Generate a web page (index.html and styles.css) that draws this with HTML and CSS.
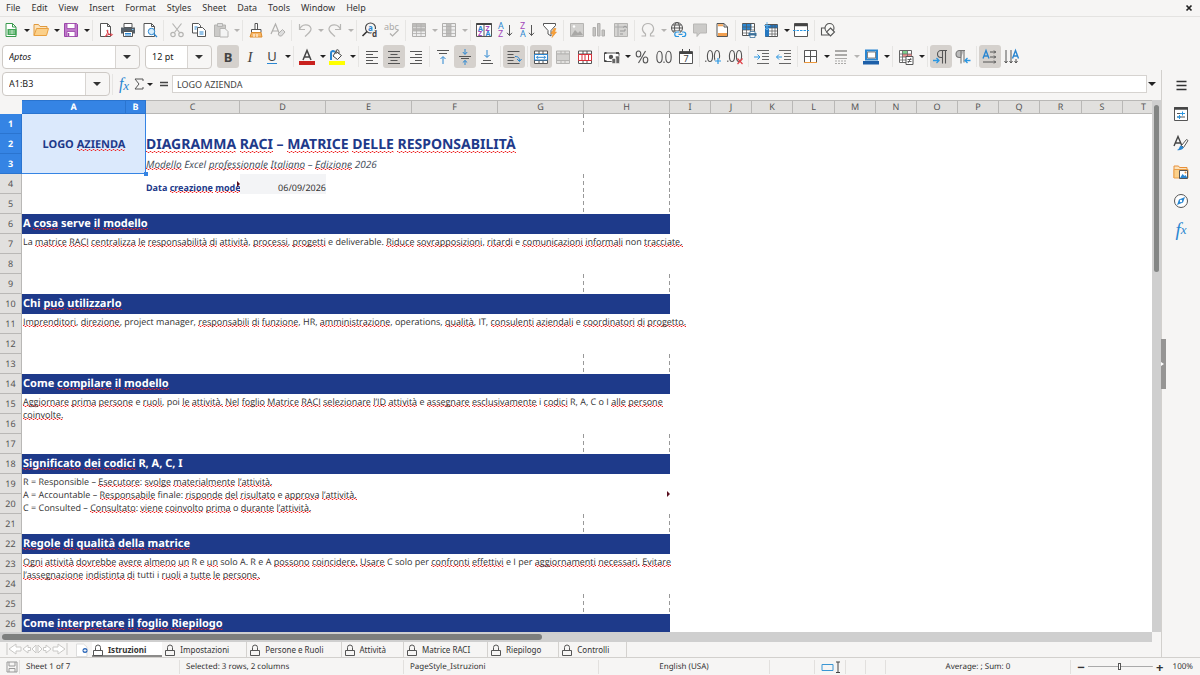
FILE: index.html
```html
<!DOCTYPE html>
<html lang="en">
<head>
<meta charset="utf-8">
<meta name="viewport" content="width=device-width, initial-scale=1">
<title>Diagramma RACI</title>
<link rel="stylesheet" href="styles.css">
</head>
<body>
<nav class="menubar" aria-label="Menu">
  <button>File</button><button>Edit</button><button>View</button><button>Insert</button><button>Format</button><button>Styles</button><button>Sheet</button><button>Data</button><button>Tools</button><button>Window</button><button>Help</button>
  <button class="close" aria-label="Close"><svg class="tiny" viewBox="0 0 8 8"><path d="M1.500 1.500l5 5M6.500 1.500l-5 5" stroke="#222" stroke-width="1.700"/></svg></button>
</nav>

<div class="toolbar" role="toolbar" aria-label="Standard">
  <button class="tool" aria-label="New"><svg viewBox="0 0 16 16"><path d="M3 1.500h6.500l3.500 3.500v9.500h-10z" fill="#fff" stroke="#3a9a4e"/><path d="M9.500 1.500v3.500h3.500" stroke="#3a9a4e"/><path d="M4.500 7h9v6h-9z" fill="#43a657"/><path d="M6 9h6M6 11h6M9 8v4" stroke="#d5f0da" stroke-width=".8"/></svg></button><button class="caret" aria-label="New options"></button>
  <button class="tool" aria-label="Open"><svg viewBox="0 0 16 16"><path d="M1 13.500v-11h4.500l1.500 2h7v2" fill="#fbe3bd" stroke="#e09a3e"/><path d="M1 13.500l2.500-7h12l-2 7z" fill="#fbd08a" stroke="#e9a03f"/></svg></button><button class="caret" aria-label="Open options"></button>
  <button class="tool" aria-label="Save"><svg viewBox="0 0 16 16"><path d="M1.500 1.500h12l1 1v12h-13z" fill="#c07acb" stroke="#9a45a8"/><path d="M4 1.500h8v5h-8zM4 9.500h8v5h-8z" fill="#fff" stroke="#9a45a8" stroke-width=".8"/><path d="M5.500 11v3" stroke="#9a45a8" stroke-width="1.500"/></svg></button><button class="caret" aria-label="Save options"></button>
  <i class="sep"></i>
  <button class="tool" aria-label="Export PDF"><svg viewBox="0 0 16 16"><path d="M2.500 1.500h7l3 3v10h-10z" fill="#fff" stroke="#555"/><path d="M9.500 1.500v3h3" stroke="#555"/><path d="M7 14.500c3-3 3-6 2.500-6.500s-1 1 1 3.500 4 2 4 1.200-4-1.200-7 1.800z" fill="none" stroke="#d8303a"/></svg></button>
  <button class="tool" aria-label="Print"><svg viewBox="0 0 16 16"><path d="M4 1.500h8v4h-8z" fill="#fff" stroke="#555"/><path d="M1 5.500h14v6h-14z" fill="#566069"/><path d="M3.500 9.500h9v5h-9z" fill="#fff" stroke="#555"/><path d="M5 11.500h6M5 13h6" stroke="#2a86d1"/><path d="M12 7.500h1.500" stroke="#7cc4f5"/></svg></button>
  <button class="tool" aria-label="Print preview"><svg viewBox="0 0 16 16"><path d="M2 1.500h7.500l3 3v10h-10.500z" fill="#fff" stroke="#555"/><path d="M9.500 1.500v3h3" stroke="#555"/><circle cx="9.500" cy="9.500" r="3.200" fill="#d8edfb" stroke="#2a86d1"/><path d="M12 12l3 3" stroke="#2a86d1" stroke-width="1.300"/></svg></button>
  <i class="sep"></i>
  <button class="tool" disabled aria-label="Cut"><svg viewBox="0 0 16 16"><g stroke="#b5b4b2" stroke-width="1.200"><path d="M3.500 1.500l7 9M12.500 1.500l-7 9"/><circle cx="4" cy="12.500" r="2.200"/><circle cx="12" cy="12.500" r="2.200"/></g></svg></button>
  <button class="tool" aria-label="Copy"><svg viewBox="0 0 16 16"><g fill="#fff" stroke="#555"><path d="M1.500 1.500h6l2 2v7.500h-8z"/><path d="M6.500 5.500h5l3 3v6h-8z"/></g><path d="M3.500 5h3M3.500 7h2M8.500 10h4M8.500 12h4" stroke="#2a86d1"/></svg></button>
  <button class="tool" disabled aria-label="Paste"><svg viewBox="0 0 16 16"><path d="M1.500 3h11v11.500h-11z" fill="#cbcac8" stroke="#b5b4b2"/><path d="M4.500 1.500h5v3h-5z" fill="#ddd" stroke="#b5b4b2"/><path d="M7 6.500h5l3 3v5.500h-8z" fill="#f4f4f4" stroke="#b5b4b2"/></svg></button><button class="caret" disabled aria-label="Paste options"></button>
  <i class="sep"></i>
  <button class="tool" aria-label="Clone formatting"><svg viewBox="0 0 16 16"><path d="M7 1.500h2.500v6H7z" fill="#fff" stroke="#555"/><path d="M3.500 7.500h9.500v3H3.500z" fill="#fff" stroke="#555"/><path d="M3.500 10.500h9.500l1 4.500h-12z" fill="#f6b76a" stroke="#dd8c2c"/><path d="M6 12v3M9 12v3" stroke="#fff"/></svg></button>
  <button class="tool" disabled aria-label="Clear formatting"><svg viewBox="0 0 16 16"><path d="M1 12l4.500-10 4 10M2.500 9h6" stroke="#b0afad" stroke-width="1.200"/><path d="M8 12l4.500-4.500 2.500 2.500-3.500 4h-2z" fill="#ddd" stroke="#b0afad"/></svg></button>
  <i class="sep"></i>
  <button class="tool" disabled aria-label="Undo"><svg viewBox="0 0 16 16"><path d="M2.500 2v5.500h5.500M2.500 7.500c2-6 10-6 11.500-1 .5 3-3 5-6 8" stroke="#b8b7b5" stroke-width="1.200"/></svg></button><button class="caret" disabled aria-label="Undo list"></button>
  <button class="tool" disabled aria-label="Redo"><svg viewBox="0 0 16 16"><path d="M13.500 2v5.500H8M13.500 7.500c-2-6-10-6-11.500-1-.5 3 3 5 6 8" stroke="#b8b7b5" stroke-width="1.200"/></svg></button><button class="caret" disabled aria-label="Redo list"></button>
  <i class="sep"></i>
  <button class="tool" aria-label="Find and replace"><svg viewBox="0 0 16 16"><circle cx="8.500" cy="6" r="5" stroke="#444" stroke-width="1.100"/><path d="M5 9.500l-4.500 4.500" stroke="#333" stroke-width="1.600"/><text x="6" y="9" font-size="8" fill="#2a86d1" font-weight="bold">a</text><text x="10" y="15" font-size="8" fill="#444" font-weight="bold" stroke="#f5f4f2" stroke-width="2" paint-order="stroke">d</text></svg></button>
  <button class="tool" disabled aria-label="Spelling"><svg viewBox="0 0 16 16"><text x="0" y="8" font-size="9" fill="#aaa9a7">abc</text><path d="M6 11.500l2.500 2.500 6-6" stroke="#b0afad" stroke-width="1.200"/></svg></button>
  <i class="sep"></i>
  <button class="tool" disabled aria-label="Row"><svg viewBox="0 0 16 16"><path d="M1.500 1.500h13v13h-13z" fill="#eee" stroke="#b0afad"/><path d="M1.500 1.500h13v3h-13zM1.500 5.500h13v4h-13z" fill="#bdbcba"/><path d="M5.500 2v12M10 2v12M2 4.500h12M2 8h12M2 11.500h12" stroke="#b0afad" stroke-width=".8"/></svg></button><button class="caret" disabled aria-label="Row options"></button>
  <button class="tool" disabled aria-label="Column"><svg viewBox="0 0 16 16"><path d="M1.500 1.500h13v13h-13z" fill="#eee" stroke="#b0afad"/><path d="M5.500 1.500h4.500v13h-4.500z" fill="#bdbcba"/><path d="M5.500 2v12M10 2v12M2 4.500h12M2 8h12M2 11.500h12" stroke="#b0afad" stroke-width=".8"/></svg></button><button class="caret" disabled aria-label="Column options"></button>
  <i class="sep"></i>
  <button class="tool" aria-label="Sort"><svg viewBox="0 0 16 16"><path d="M.5 1.500h15v13h-15zM8 3v11.500" fill="#fff" stroke="#555"/><path d="M.5 2h15" stroke="#444" stroke-width="2"/><g font-size="7" font-weight="bold"><text x="2" y="8.500" fill="#2a86d1">A</text><text x="2" y="14.200" fill="#a347ba">Z</text><text x="9.500" y="8.500" fill="#a347ba">Z</text><text x="9.500" y="14.200" fill="#2a86d1">A</text></g></svg></button>
  <button class="tool" aria-label="Sort ascending"><svg viewBox="0 0 16 16"><g font-size="9"><text x="0" y="7" fill="#2a86d1">A</text><text x="0" y="15" fill="#a347ba">Z</text></g><path d="M11.500 3v10.500M9 10.800l2.500 2.700 2.500-2.700" stroke="#555"/></svg></button>
  <button class="tool" aria-label="Sort descending"><svg viewBox="0 0 16 16"><g font-size="9"><text x="0" y="7" fill="#a347ba">Z</text><text x="0" y="15" fill="#2a86d1">A</text></g><path d="M11.500 3v10.500M9 10.800l2.500 2.700 2.500-2.700" stroke="#555"/></svg></button>
  <button class="tool" aria-label="AutoFilter"><svg viewBox="0 0 16 16"><path d="M1.500 1.500h12v2l-4.500 5v5.500l-3-2v-3.500l-4.500-5z" fill="#fff" stroke="#555"/><path d="M12 6.500l-3 5h2l-1 4 4.500-5.500h-2l1.500-3.500z" fill="#f8a23b" stroke="#e8871b" stroke-width=".5"/></svg></button>
  <i class="sep"></i>
  <button class="tool" disabled aria-label="Image"><svg viewBox="0 0 16 16"><path d="M1.500 1.500h13v13h-13z" fill="#d2d1cf" stroke="#b5b4b2"/><path d="M2 14l4-6 3 3 2-2 3 4" fill="#a9a8a6"/><circle cx="5" cy="4.500" r="1.200" fill="#fff"/></svg></button>
  <button class="tool" disabled aria-label="Chart"><svg viewBox="0 0 16 16"><path d="M2 5.500h2.500v8.500H2zM6.500 1.500H9v12.500H6.500zM11 8h2.500v6H11z" fill="#c6c5c3" stroke="#b0afad"/></svg></button>
  <button class="tool" disabled aria-label="Pivot table"><svg viewBox="0 0 16 16"><path d="M1.500 1.500h13v13h-13z" fill="#d5d4d2" stroke="#b5b4b2"/><path d="M2 5h12M5 2v12" stroke="#aaa"/><path d="M7 9h5V7M10 5.500l2-1.500 2 1.500M7 12h3" stroke="#999"/></svg></button>
  <i class="sep"></i>
  <button class="tool" disabled aria-label="Special character"><svg viewBox="0 0 16 16"><path d="M1.500 14h4v-2c-6-5-2-10.500 2.500-10.500s8.500 5.500 2.500 10.500v2h4" stroke="#b5b4b2" stroke-width="1.200"/></svg></button><button class="caret" disabled aria-label="Characters"></button>
  <button class="tool" aria-label="Hyperlink"><svg viewBox="0 0 16 16"><g stroke="#555"><circle cx="7" cy="6" r="5.500"/><ellipse cx="7" cy="6" rx="2.500" ry="5.500"/><path d="M1.500 6h11M2.500 3h9M2.500 9h9"/></g><path d="M9.500 10.500h-2a2 2 0 000 4h2M12.500 10.500h1a2 2 0 010 4h-1M9.500 12.500h4" stroke="#f5f4f2" stroke-width="3"/><path d="M9 10H7a2.200 2.200 0 000 4.500h2M12 10h1.500a2.200 2.200 0 010 4.500H12M8.500 12.300h4" stroke="#2a96e1" stroke-width="1.200"/></svg></button>
  <button class="tool" disabled aria-label="Comment"><svg viewBox="0 0 16 16"><path d="M1.500 2h13v9H8l-3 3.500V11H1.500z" fill="#cbcac8" stroke="#b8b7b5"/></svg></button>
  <button class="tool" aria-label="Headers and footers"><svg viewBox="0 0 16 16"><path d="M3 1.500h7l3.500 3.500v9.500H3z" fill="#fff" stroke="#555"/><path d="M10 1.500V5h3.500" stroke="#555"/><path d="M4 2.200h5v2H4zM4 11h9v3H4z" fill="#f2a050"/></svg></button>
  <i class="sep"></i>
  <button class="tool" aria-label="Define print area"><svg viewBox="0 0 16 16"><path d="M1.500 1.500h12v12h-12z" fill="#fff" stroke="#555"/><path d="M1.500 2h9v6h-9z" fill="#2a86d1"/><path d="M1.500 5h12M1.500 8h12M1.500 11h12M5.500 1.500v12M9.500 1.500v12" stroke="#555" stroke-width=".7"/><path d="M7.500 11h8v3h-8z" fill="#3a6e98"/><path d="M9 9.500h5v2H9zM9 13h5v2.500H9z" fill="#fff" stroke="#3a6e98" stroke-width=".8"/></svg></button>
  <button class="tool" aria-label="Freeze rows and columns"><svg viewBox="0 0 16 16"><path d="M2.500 2.500h12v12h-12z" fill="#fff" stroke="#555"/><path d="M2.500 3h12v3h-12zM2 5h4v9.500H2z" fill="#2477c0"/><path d="M6 6h8.500M6 9h8.500M6 12h8.500M9 3v11M12 3v11" stroke="#555" stroke-width=".7"/><path d="M4 0v8M2 6l2 2 2-2M1 3.500h6" stroke="#64b6ee" stroke-width=".9"/></svg></button><button class="caret" aria-label="Freeze options"></button>
  <button class="tool" aria-label="Split window"><svg viewBox="0 0 16 16"><path d="M1.500 1.500h13v13h-13z" fill="#fff" stroke="#555"/><path d="M1.500 3h13" stroke="#444" stroke-width="2.500"/><path d="M0 8.500h16" stroke="#2a96e1" stroke-dasharray="2.500 1"/></svg></button>
  <i class="sep"></i>
  <button class="tool" aria-label="Draw functions"><svg viewBox="0 0 16 16"><g fill="#f8f8f6" stroke="#555" stroke-width="1.100"><path d="M1.500 6h7v7h-7z"/><circle cx="9.500" cy="6" r="4.500"/><path d="M10.500 6l4 4-4 4-4-4z"/></g></svg></button>
</div>

<div class="toolbar formatting" role="toolbar" aria-label="Formatting">
  <select class="combo font-name" aria-label="Font name"><option>Aptos</option></select>
  <select class="combo font-size" aria-label="Font size"><option>12 pt</option></select>
  <button class="tool on glyph bold" aria-label="Bold">B</button>
  <button class="tool glyph italic" aria-label="Italic">I</button>
  <button class="tool glyph" aria-label="Underline"><span class="under">U</span></button><button class="caret" aria-label="Underline options"></button>
  <i class="sep"></i>
  <button class="tool" aria-label="Font colour"><svg viewBox="0 0 16 16"><path d="M4 11l4-9.500 4 9.500M5.300 8h5.400" stroke="#444" stroke-width="1.500"/><path d="M0 12h16v4H0z" fill="#c9211e"/></svg></button><button class="caret" aria-label="Font colours"></button>
  <button class="tool" aria-label="Background colour"><svg viewBox="0 0 16 16"><path d="M2 11V4c0-2 2-2.500 4-1" stroke="#2a86d1" stroke-width="2"/><path d="M7 2.500l5.500 4-4 4-4.500-3.500z" fill="#fff" stroke="#444"/><path d="M7 5V1.500c1.500-1.500 3-.5 3 1v2" stroke="#444"/><path d="M0 12h16v4H0z" fill="#ff0"/></svg></button><button class="caret" aria-label="Background colours"></button>
  <i class="sep"></i>
  <button class="tool" aria-label="Align left"><svg viewBox="0 0 16 16"><path d="M2 2.500h12M2 5.500h7M2 8.500h12M2 11.500h7M2 14.500h12" stroke="#555"/></svg></button>
  <button class="tool on" aria-label="Centre"><svg viewBox="0 0 16 16"><path d="M2 2.500h12M4.500 5.500h7M2 8.500h12M4.500 11.500h7M2 14.500h12" stroke="#555"/></svg></button>
  <button class="tool" aria-label="Align right"><svg viewBox="0 0 16 16"><path d="M2 2.500h12M7 5.500h7M2 8.500h12M7 11.500h7M2 14.500h12" stroke="#555"/></svg></button>
  <i class="sep"></i>
  <button class="tool" aria-label="Align top"><svg viewBox="0 0 16 16"><path d="M2 1.500h12M4 4.500h8" stroke="#555"/><path d="M8 15V8M5.500 10L8 7.500l2.500 2.500" stroke="#2a86d1"/></svg></button>
  <button class="tool on" aria-label="Centre vertically"><svg viewBox="0 0 16 16"><path d="M2 7.500h12M4 9.500h8" stroke="#555"/><path d="M8 0v5M5.800 3L8 5.500 10.200 3M8 16v-4.500M5.800 13.500L8 11.500l2.200 2" stroke="#2a86d1"/></svg></button>
  <button class="tool" aria-label="Align bottom"><svg viewBox="0 0 16 16"><path d="M4 11.500h8M2 14.500h12" stroke="#555"/><path d="M8 1v7M5.500 6L8 8.500 10.500 6" stroke="#2a86d1"/></svg></button>
  <i class="sep"></i>
  <button class="tool on" aria-label="Wrap text"><svg viewBox="0 0 16 16"><path d="M1.500 2.500h12M1.500 5.500h6M1.500 8.500h7M1.500 11.500h6M1.500 14.500h12" stroke="#555"/><path d="M9 7.500c3.500 0 4.500 1.500 4.500 4.500M11 10l2.500 2.500L15.500 10" stroke="#2a86d1"/></svg></button>
  <i class="sep"></i>
  <button class="tool on" aria-label="Merge and centre"><svg viewBox="0 0 16 16"><path d="M1.500 2h13v12.500h-13zM1.500 5h13M1.500 11.500h13M6 2v3M10 2v3M6 11.500v3M10 11.500v3" fill="#fff" stroke="#555"/><path d="M1.500 5.500h13v5.500h-13z" fill="#fff" stroke="#2a86d1"/><path d="M3.500 8.300h9M5 6.800L3.500 8.300 5 9.800M11 6.800l1.500 1.500L11 9.800" stroke="#2a86d1"/></svg></button>
  <button class="tool" disabled aria-label="Merge cells"><svg viewBox="0 0 16 16"><path d="M1.500 2h13v12.500h-13zM1.500 5h13M1.500 11.500h13M6 2v3M10 2v3M6 11.500v3M10 11.500v3" fill="#e2e1df" stroke="#b5b4b2"/><path d="M1.500 5h13v6.500h-13z" fill="#d2d1cf" stroke="#b5b4b2"/></svg></button>
  <button class="tool" aria-label="Unmerge cells"><svg viewBox="0 0 16 16"><path d="M1.500 2h13v12.500h-13zM1.500 5h13M1.500 11.500h13M6 2v3M10 2v3M6 11.500v3M10 11.500v3" fill="#fff" stroke="#555"/><path d="M1.500 5.500h13v6h-13zM5 5v6.500M8 5v6.500M11.500 5v6.500" fill="#fff" stroke="#d8303a"/></svg></button>
  <i class="sep"></i>
  <button class="tool" aria-label="Currency"><svg viewBox="0 0 16 16"><path d="M.5 4h14.500v8.500H.5z" fill="#fff" stroke="#555"/><circle cx="7" cy="8" r="2.200" fill="#555"/><path d="M.5 4h2M.5 12h2M12 4h3" stroke="#333" stroke-width="1.500"/><path d="M8 9.500h4v5H8zM11.500 7h4v7.500h-4z" fill="#666" stroke="#f6f5f3" stroke-width=".6"/></svg></button><button class="caret" aria-label="Currencies"></button>
  <button class="tool" aria-label="Percent"><svg viewBox="0 0 16 16"><g stroke="#555" stroke-width="1.100"><ellipse cx="4.500" cy="5" rx="2.300" ry="3"/><ellipse cx="11.500" cy="11" rx="2.300" ry="3"/><path d="M11.500 2l-7 12"/></g></svg></button>
  <button class="tool" aria-label="Number"><svg viewBox="0 0 16 16"><g stroke="#555" stroke-width="1.100"><ellipse cx="3.500" cy="8" rx="2.700" ry="5.700"/><ellipse cx="12.500" cy="8" rx="2.700" ry="5.700"/><path d="M8 12.500v1.500"/></g></svg></button>
  <button class="tool" aria-label="Date"><svg viewBox="0 0 16 16"><path d="M1.500 2.500h13v12h-13z" fill="#fff" stroke="#555"/><path d="M1.500 4h13" stroke="#444" stroke-width="2"/><path d="M4.500 0v3M11.500 0v3" stroke="#444"/><text x="5.500" y="13" font-size="9" fill="#444">7</text></svg></button>
  <i class="sep"></i>
  <button class="tool" aria-label="Add decimal place"><svg viewBox="0 0 16 16"><g stroke="#555" stroke-width="1.100"><ellipse cx="5" cy="7" rx="2.600" ry="5.500"/><ellipse cx="12" cy="7" rx="2.600" ry="5.500"/><path d="M.8 11.500V13"/></g><path d="M13 9v6M10 12h6" stroke="#f6f5f3" stroke-width="3"/><path d="M13 9v6M10 12h6" stroke="#2a96e1" stroke-width="1.200"/></svg></button>
  <button class="tool" aria-label="Delete decimal place"><svg viewBox="0 0 16 16"><g stroke="#555" stroke-width="1.100"><ellipse cx="5" cy="7" rx="2.600" ry="5.500"/><ellipse cx="12" cy="7" rx="2.600" ry="5.500"/><path d="M.8 11.500V13"/></g><path d="M10.500 9.500l5 5.500M15.500 9.500l-5 5.500" stroke="#e04048" stroke-width="1.200"/></svg></button>
  <i class="sep"></i>
  <button class="tool" aria-label="Increase indent"><svg viewBox="0 0 16 16"><path d="M3 1.500h12M8 4.500h7M8 7.500h7M8 10.500h7M3 14.500h12" stroke="#666"/><path d="M0 8h6M3.500 5.500L6 8l-2.500 2.500" stroke="#2a96e1"/></svg></button>
  <button class="tool" aria-label="Decrease indent"><svg viewBox="0 0 16 16"><path d="M3 1.500h12M8 4.500h7M8 7.500h7M8 10.500h7M3 14.500h12" stroke="#666"/><path d="M6 8H.5M3 5.500L.5 8 3 10.500" stroke="#2a96e1"/></svg></button>
  <i class="sep"></i>
  <button class="tool" aria-label="Borders"><svg viewBox="0 0 16 16"><path d="M1.500 1.500h12v12h-12z" fill="#fff" stroke="#555"/><path d="M7.500 2v12M2 7.500h12" stroke="#555"/><path d="M1 13.500h13" stroke="#eb983d"/></svg></button><button class="caret" aria-label="Border options"></button>
  <button class="tool" disabled aria-label="Border style"><svg viewBox="0 0 16 16"><path d="M2 2h12M2 6h12" stroke="#aaa9a7" stroke-width="2"/><path d="M2 9.500h12" stroke="#aaa9a7"/><path d="M2 12h12M2 14.500h12" stroke="#aaa9a7" stroke-dasharray="2 1"/></svg></button><button class="caret" disabled aria-label="Border styles"></button>
  <button class="tool" aria-label="Border colour"><svg viewBox="0 0 16 16"><path d="M3 1.500h11v9H3z" fill="#fff" stroke="#2a86d1" stroke-width="2"/><path d="M4.500 3h8v6h-8z" stroke="#666" stroke-width=".8"/><path d="M0 12h16v3.500H0z" fill="#1d5fa8"/></svg></button><button class="caret" aria-label="Border colours"></button>
  <i class="sep"></i>
  <button class="tool" aria-label="Conditional formatting"><svg viewBox="0 0 16 16"><path d="M1.500 1.500h12v12h-12z" fill="#fff" stroke="#666"/><path d="M4.500 2h5v3h-5z" fill="#7fd38f"/><path d="M4.500 5h9v3h-9z" fill="#ee8f8f"/><path d="M1.500 5h12M1.500 8h12M1.500 11h12M4.500 1.500v12M9.500 1.500v7" stroke="#666" stroke-width=".8"/><path d="M8 7.500h7v8H8z" fill="#fff" stroke="#555"/><path d="M9.500 10.500h4M9.500 12.500h4M13 9l-3 5" stroke="#444" stroke-width=".8"/></svg></button><button class="caret" aria-label="Conditional options"></button>
  <i class="sep"></i>
  <button class="tool on" aria-label="Left to right"><svg viewBox="0 0 16 16"><path d="M14 1.500H8a3.500 3.500 0 000 7h1.500M9.500 1.500v13M12.500 1.500v13" stroke="#555" stroke-width="1.100"/><path d="M0 11.500h6M3.500 9L6 11.500 3.500 14" stroke="#2a96e1" stroke-width="1.300"/></svg></button>
  <button class="tool" aria-label="Right to left"><svg viewBox="0 0 16 16"><path d="M9 1.500H4.500a3.500 3.500 0 000 7H6z" fill="#bbb"/><path d="M10 1.500H4.500a3.500 3.500 0 000 7H6M6 1.500v13M9 1.500v12" stroke="#777" stroke-width="1.100"/><path d="M15.500 11.500H10M12.500 9L10 11.500l2.500 2.500" stroke="#2a96e1" stroke-width="1.300"/></svg></button>
  <i class="sep"></i>
  <button class="tool on" aria-label="Horizontal text"><svg viewBox="0 0 16 16"><path d="M1 9.500l3-8 3 8M2 7h4" stroke="#2a86d1" stroke-width="1.400"/><path d="M8 3h6M12 1.500L13.500 3 12 4.500M8 8h6M12 6.500L13.500 8 12 9.500M1 13h13M12 11.500l1.500 1.500-1.500 1.500" stroke="#555"/></svg></button>
  <button class="tool" aria-label="Vertical text"><svg viewBox="0 0 16 16"><path d="M8.500 9.500l3-8 3 8M9.500 7h4" stroke="#2a86d1" stroke-width="1.400"/><path d="M2 1v13M.5 12L2 14l1.500-2M7 1v13M5.500 12L7 14l1.500-2M12 10v4M10.500 12l1.500 2 1.500-2" stroke="#555"/></svg></button>
</div>

<div class="workspace">
<main class="document">
  <div class="formula-bar">
    <select class="combo name-box" aria-label="Name box"><option>A1:B3</option></select>
    <i class="sep"></i>
    <button class="fx" aria-label="Function wizard">f<sub>x</sub></button>
    <button class="sum" aria-label="Select function"><svg viewBox="0 0 10 12"><path d="M9 3V1H1l4 5-4 5h8V9" stroke="#555"/></svg></button><button class="caret" aria-label="Function list"></button>
    <button class="equals" aria-label="Formula"><svg class="tiny" viewBox="0 0 8 8"><path d="M0 2.500h8M0 5.500h8" stroke="#444" stroke-width="1.300"/></svg></button>
    <input class="formula" type="text" value="LOGO AZIENDA" aria-label="Input line">
    <button class="expand" aria-label="Expand formula bar"></button>
  </div>
  <div class="grid-area">
    <div class="sheet">
    <table>
      <colgroup><col class="c-head"><col class="c-a"><col class="c-b"><col class="c-c"><col span="5" class="c-mid"><col span="3" class="c-std"><col class="c-wide"><col span="5" class="c-std"><col class="c-wide"><col class="c-std"><col></colgroup>
      <thead><tr><td class="corner"></td><th class="sel">A</th><th class="sel">B</th><th>C</th><th>D</th><th>E</th><th>F</th><th>G</th><th>H</th><th>I</th><th>J</th><th>K</th><th>L</th><th>M</th><th>N</th><th>O</th><th>P</th><th>Q</th><th>R</th><th>S</th><th class="last">T</th></tr></thead>
      <tbody>
      <tr><th class="sel">1</th><td class="logo" colspan="2" rowspan="3">LOGO <u>AZIENDA</u><span class="handle"></span></td><td colspan="5" class="brk"></td><td class="brk"></td><td colspan="12"></td></tr>
      <tr><th class="sel">2</th><td class="title brk" colspan="6"><u>DIAGRAMMA</u> <u>RACI</u> – <u>MATRICE</u> <u>DELLE</u> <u>RESPONSABILITÀ</u></td><td colspan="12"></td></tr>
      <tr><th class="sel">3</th><td class="subtitle brk" colspan="6"><u>Modello</u> Excel <u>professionale</u> <u>Italiano</u> – <u>Edizione</u> 2026</td><td colspan="12"></td></tr>
      <tr><th>4</th><td colspan="2"></td><td class="label"><span class="clip">Data <u>creazione</u> <u>mode</u></span><span class="more"></span></td><td class="date">06/09/2026</td><td colspan="3" class="brk"></td><td class="brk"></td><td colspan="12"></td></tr>
      <tr><th>5</th><td colspan="7" class="brk"></td><td class="brk"></td><td colspan="12"></td></tr>
      <tr><th>6</th><td class="band" colspan="8">A <u>cosa</u> serve <u>il</u> <u>modello</u></td><td colspan="12"></td></tr>
      <tr><th>7</th><td class="note" colspan="8" rowspan="2">La <u>matrice</u> <u>RACI</u> <u>centralizza</u> <u>le</u> <u>responsabilità</u> <u>di</u> <u>attività</u>, <u>processi</u>, <u>progetti</u> e deliverable. <u>Riduce</u> <u>sovrapposizioni</u>, <u>ritardi</u> e <u>comunicazioni</u> <u>informali</u> non <u>tracciate.</u></td><td colspan="12"></td></tr>
      <tr><th>8</th><td colspan="12"></td></tr>
      <tr><th>9</th><td colspan="7" class="brk"></td><td class="brk"></td><td colspan="12"></td></tr>
      <tr><th>10</th><td class="band" colspan="8">Chi <u>può</u> <u>utilizzarlo</u></td><td colspan="12"></td></tr>
      <tr><th>11</th><td class="note" colspan="8" rowspan="2"><u>Imprenditori</u>, <u>direzione</u>, project manager, <u>responsabili</u> <u>di</u> <u>funzione</u>, HR, <u>amministrazione</u>, operations, <u>qualità</u>, IT, <u>consulenti</u> <u>aziendali</u> e <u>coordinatori</u> <u>di</u> <u>progetto.</u></td><td colspan="12"></td></tr>
      <tr><th>12</th><td colspan="12"></td></tr>
      <tr><th>13</th><td colspan="7" class="brk"></td><td class="brk"></td><td colspan="12"></td></tr>
      <tr><th>14</th><td class="band" colspan="8">Come <u>compilare</u> <u>il</u> <u>modello</u></td><td colspan="12"></td></tr>
      <tr><th>15</th><td class="note" colspan="8" rowspan="2"><u>Aggiornare</u> <u>prima</u> <u>persone</u> e <u>ruoli</u>, poi <u>le</u> <u>attività.</u> <u>Nel</u> <u>foglio</u> <u>Matrice</u> <u>RACI</u> <u>selezionare</u> <u>l’ID</u> <u>attività</u> e <u>assegnare</u> <u>esclusivamente</u> i <u>codici</u> R, A, C o I <u>alle</u> <u>persone</u><br><u>coinvolte.</u></td><td colspan="12"></td></tr>
      <tr><th>16</th><td colspan="12"></td></tr>
      <tr><th>17</th><td colspan="7" class="brk"></td><td class="brk"></td><td colspan="12"></td></tr>
      <tr><th>18</th><td class="band" colspan="8"><u>Significato</u> <u>dei</u> <u>codici</u> R, A, C, I</td><td colspan="12"></td></tr>
      <tr><th>19</th><td class="note" colspan="8" rowspan="2">R = Responsible – <u>Esecutore</u>: <u>svolge</u> <u>materialmente</u> <u>l’attività.</u><br>A = Accountable – <u>Responsabile</u> finale: <u>risponde</u> <u>del</u> <u>risultato</u> e <u>approva</u> <u>l’attività.</u><br>C = Consulted – <u>Consultato</u>: <u>viene</u> <u>coinvolto</u> <u>prima</u> o <u>durante</u> <u>l’attività.</u><span class="more"></span></td><td colspan="12"></td></tr>
      <tr><th>20</th><td colspan="12"></td></tr>
      <tr><th>21</th><td colspan="7" class="brk"></td><td class="brk"></td><td colspan="12"></td></tr>
      <tr><th>22</th><td class="band" colspan="8"><u>Regole</u> <u>di</u> <u>qualità</u> <u>della</u> <u>matrice</u></td><td colspan="12"></td></tr>
      <tr><th>23</th><td class="note" colspan="8" rowspan="2"><u>Ogni</u> <u>attività</u> <u>dovrebbe</u> <u>avere</u> <u>almeno</u> <u>un</u> R e <u>un</u> solo A. R e A <u>possono</u> <u>coincidere.</u> <u>Usare</u> C solo per <u>confronti</u> <u>effettivi</u> e I per <u>aggiornamenti</u> <u>necessari.</u> <u>Evitare</u><br><u>l’assegnazione</u> <u>indistinta</u> <u>di</u> tutti i <u>ruoli</u> a <u>tutte</u> <u>le</u> <u>persone.</u></td><td colspan="12"></td></tr>
      <tr><th>24</th><td colspan="12"></td></tr>
      <tr><th>25</th><td colspan="7" class="brk"></td><td class="brk"></td><td colspan="12"></td></tr>
      <tr><th>26</th><td class="band" colspan="8">Come <u>interpretare</u> <u>il</u> <u>foglio</u> <u>Riepilogo</u></td><td colspan="12"></td></tr>
      </tbody>
    </table>
    </div>
    <div class="vscroll"><div class="vthumb"></div></div>
    <div class="hscroll"><div class="hthumb"></div></div>
  </div>
  <div class="tabs">
    <svg class="tab-nav" viewBox="0 0 62 14" aria-hidden="true"><g fill="#fff" stroke="#c9c8c6"><path d="M1 1v12M61 1v12"/><path d="M10 2L3 7l7 5V9h5V5h-5z"/><path d="M22 3l-5 4 5 4V8.500h2.500v-3H22zM30 3l-4 4 4 4z"/><path d="M32 3l4 4-4 4zM40 3l5 4-5 4V8.500h-2.500v-3H40z"/><path d="M52 2l7 5-7 5V9h-5V5h5z"/></g></svg>
    <button class="add-sheet" aria-label="Add sheet"><svg viewBox="0 0 12 14"><path d="M.5 1h7l3.500 3v9.500H.5z" fill="#fff" stroke="#ddd"/><circle cx="9" cy="7.500" r="2.500" fill="#2a66b8"/><path d="M9 6v3M7.500 7.500h3" stroke="#fff" stroke-width=".9"/></svg></button>
    <button class="tab active"><svg class="lock" viewBox="0 0 10 12"><path d="M.5 6.500h9v5h-9zM2.500 6.500V3.500a2.500 2.500 0 015 0v3"/></svg>Istruzioni</button>
    <button class="tab"><svg class="lock" viewBox="0 0 10 12"><path d="M.5 6.500h9v5h-9zM2.500 6.500V3.500a2.500 2.500 0 015 0v3"/></svg>Impostazioni</button>
    <button class="tab"><svg class="lock" viewBox="0 0 10 12"><path d="M.5 6.500h9v5h-9zM2.500 6.500V3.500a2.500 2.500 0 015 0v3"/></svg>Persone e Ruoli</button>
    <button class="tab"><svg class="lock" viewBox="0 0 10 12"><path d="M.5 6.500h9v5h-9zM2.500 6.500V3.500a2.500 2.500 0 015 0v3"/></svg>Attività</button>
    <button class="tab"><svg class="lock" viewBox="0 0 10 12"><path d="M.5 6.500h9v5h-9zM2.500 6.500V3.500a2.500 2.500 0 015 0v3"/></svg>Matrice RACI</button>
    <button class="tab"><svg class="lock" viewBox="0 0 10 12"><path d="M.5 6.500h9v5h-9zM2.500 6.500V3.500a2.500 2.500 0 015 0v3"/></svg>Riepilogo</button>
    <button class="tab"><svg class="lock" viewBox="0 0 10 12"><path d="M.5 6.500h9v5h-9zM2.500 6.500V3.500a2.500 2.500 0 015 0v3"/></svg>Controlli</button>
  </div>
</main>
<aside class="sidebar">
  <button class="collapse" aria-label="Hide sidebar"></button>
  <button class="side" aria-label="Sidebar settings"><svg viewBox="0 0 16 16"><path d="M3.500 4.500h10M3.500 8.500h10M3.500 12.500h10" stroke="#333" stroke-width="1.300"/></svg></button>
  <button class="side" aria-label="Properties"><svg viewBox="0 0 16 16"><path d="M1.500 1.500h13v13h-13z" fill="#fff" stroke="#555"/><path d="M1 2.500h14" stroke="#444" stroke-width="2.500"/><path d="M4 7.500h8M4 11h8" stroke="#555"/><path d="M9.500 5.500v4M6.500 9v4M7 7.500h5M4 11h4" stroke="#2a96e1"/></svg></button>
  <button class="side" aria-label="Styles"><svg viewBox="0 0 16 16"><path d="M1 11L5 1.500 9 11M2.500 8h5" stroke="#444" stroke-width="1.400"/><path d="M8.500 10.500l5-6 1.500 1-4.500 7z" fill="#fff" stroke="#555"/><path d="M4 15c2 .5 6 0 6.500-2.500L8 10.500C6 11 7 14 4 15z" fill="#2a86d1"/></svg></button>
  <button class="side" aria-label="Gallery"><svg viewBox="0 0 16 16"><path d="M1 14V2h4.500l1 1.500H14V5" fill="#fbe3bd" stroke="#e8903a"/><path d="M1 14V5.500h14V14z" fill="#fbd08a" stroke="#eaa04a"/><path d="M6.500 6.500h8v8h-8z" fill="#fff" stroke="#555"/><path d="M7 14l2.500-4 2 2 1-1 2 3z" fill="#2a86d1"/><circle cx="12.500" cy="8.500" r="1" fill="#e8903a"/></svg></button>
  <button class="side" aria-label="Navigator"><svg viewBox="0 0 16 16"><circle cx="8" cy="8" r="6.500" fill="#fff" stroke="#555"/><path d="M12 4l-2 5.500L4 12l2-5.500z" fill="#2a86d1"/><circle cx="8" cy="8" r="1.200" fill="#fff"/></svg></button>
  <button class="side fx-side" aria-label="Functions">f<sub>x</sub></button>
</aside>
</div>

<footer class="status">
  <span class="cell"><svg class="save-state" viewBox="0 0 12 12"><path d="M1 1h10v10H1zM3 1v4h6V1M3 11V7.500h6V11" stroke="#999"/></svg></span>
  <span class="cell">Sheet 1 of 7</span>
  <span class="cell">Selected: 3 rows, 2 columns</span>
  <span class="cell">PageStyle_Istruzioni</span>
  <span class="cell mid">English (USA)</span>
  <span class="cell"></span>
  <span class="cell"><svg class="mode" viewBox="0 0 20 12"><path d="M1 3.500h11v6H1z" stroke="#3a96d4"/><path d="M15 1h4M15 11.500h4M17 1v10.500" stroke="#444"/></svg></span>
  <span class="cell"></span>
  <span class="cell"></span>
  <span class="cell mid">Average: ; Sum: 0</span>
  <span class="cell zoom"><button aria-label="Zoom out">−</button><input type="range" min="0" max="100" value="48" aria-label="Zoom"><button aria-label="Zoom in">+</button><span class="percent">100%</span></span>
</footer>
</body>
</html>
```
FILE: styles.css
```css
* { box-sizing: border-box; }
body {
  margin: 0;
  height: 100vh;
  display: flex;
  flex-direction: column;
  overflow: hidden;
  background: #f6f5f4;
  color: #333;
  font: 9px/12px "Noto Sans", "Open Sans", sans-serif;
  text-rendering: geometricPrecision;
}
button {
  padding: 0;
  border: 0;
  background: none;
  color: inherit;
  font: inherit;
}
svg { display: block; fill: none; overflow: visible; }
svg text { font-family: "Noto Sans", sans-serif; }
.tiny { width: 8px; height: 8px; }

.menubar {
  height: 17px;
  flex: none;
  display: flex;
  align-items: center;
  padding: 0 7px 0 0;
  border-bottom: 1px solid #e4e3e1;
}
.menubar button { padding: 0 5px 0 6px; }
.menubar .close { margin-left: auto; padding: 0; }

.toolbar {
  height: 26px;
  flex: none;
  display: flex;
  align-items: center;
}
.formatting { height: 27px; padding-left: 2px; }
.tool {
  width: 22px;
  height: 23px;
  flex: none;
  display: flex;
  align-items: center;
  justify-content: center;
  border-radius: 3px;
}
.tool svg, .side svg { width: 16px; height: 16px; }
.tool.on { background: #d5d1cd; }
.glyph { font-size: 13px; color: #444; }
.bold { font-weight: 700; }
.italic { font-family: "Liberation Serif", serif; font-style: italic; font-size: 15px; }
.under { border-bottom: 1px solid #2a86d1; line-height: 13px; }
.caret {
  width: 8px;
  height: 23px;
  flex: none;
  display: flex;
  align-items: center;
  justify-content: flex-end;
}
.caret::before, .expand::before {
  content: "";
  border: solid transparent;
  border-width: 3px 3px 0;
  border-top-color: #222;
}
.caret:disabled::before { border-top-color: #b5b4b2; }
.sep {
  width: 1px;
  height: 21px;
  margin: 0 2px;
  flex: none;
  background: #e6e5e3;
}

.combo {
  height: 24px;
  flex: none;
  appearance: none;
  padding: 0 26px 0 6px;
  border: 1px solid #cdc9c5;
  border-radius: 4px;
  background:
    url("data:image/svg+xml,%3Csvg xmlns='http://www.w3.org/2000/svg' width='24' height='22'%3E%3Cpath d='M0 0h24v22H0z' fill='%23f7f6f5'/%3E%3Cpath d='M.5 0v22' stroke='%23d8d5d2'/%3E%3Cpath d='M8 9h8l-4 4z' fill='%23333'/%3E%3C/svg%3E") right center no-repeat #fff;
  color: #222;
  font: inherit;
}
.font-name { width: 138px; margin-right: 5px; font-style: italic; }
.font-size { width: 67px; margin-right: 5px; }
.name-box { width: 108px; }

.workspace { flex: 1; min-height: 0; display: flex; }
.document { flex: 1; min-width: 0; display: flex; flex-direction: column; }

.formula-bar {
  height: 30px;
  flex: none;
  display: flex;
  align-items: center;
  padding: 0 4px 2px 2px;
}
.fx, .fx-side {
  color: #2a86d1;
  font: italic 16px/18px "Liberation Serif", serif;
}
.fx { width: 18px; }
.fx sub, .fx-side sub { font-size: 13px; line-height: 0; vertical-align: -1px; }
.sum { width: 12px; padding: 0 1px; }
.sum svg { width: 10px; height: 12px; }
.equals { margin: 0 4px 0 7px; }
.formula {
  flex: 1;
  min-width: 0;
  height: 18px;
  padding: 0 4px;
  border: 1px solid #d6d3d0;
  background: #fff;
  color: #444;
  font: inherit;
}
.expand { width: 10px; height: 18px; display: flex; align-items: center; justify-content: center; }
.expand::before { border-width: 4px 4px 0; flex: none; }

.grid-area {
  flex: 1;
  min-height: 0;
  display: grid;
  grid-template: 1fr 10px / 1fr 9px;
}
.sheet { min-width: 0; min-height: 0; overflow: hidden; background: #fff; }
table { width: 100%; table-layout: fixed; border-spacing: 0; }
.c-head { width: 22px; }
.c-a { width: 104px; }
.c-b { width: 20px; }
.c-c { width: 94px; }
.c-mid { width: 86px; }
.c-std { width: 41px; }
.c-wide { width: 42px; }
th, td { height: 20px; padding: 0; white-space: nowrap; }
th {
  background: #e1e0de;
  border: solid #b9b8b6;
  border-width: 0 1px 1px 0;
  color: #555;
  font-weight: 400;
}
thead th, .corner { height: 14px; border-width: 1px 1px 1px 0; line-height: 12px; }
.corner { background: #f6f5f4; }
th.sel { background: #3584e4; border-color: #2a74cf; color: #fff; font-weight: 700; }
th.last { padding-left: 12px; border-right: 0; }

u {
  text-decoration: none;
  background: url("data:image/svg+xml,%3Csvg xmlns='http://www.w3.org/2000/svg' width='4' height='2'%3E%3Cpath d='M0 .5h1l1 1h1l1-1' fill='none' stroke='%23e22' stroke-width='1'/%3E%3C/svg%3E") 0 95% repeat-x;
}
.brk {
  background: linear-gradient(#999 4px, transparent 4px 7px, #999 7px 11px, transparent 11px 14px, #999 14px 18px, transparent 18px) right top / 1px 20px no-repeat;
}
.logo {
  position: relative;
  padding-top: 2px;
  background: #dbe9fc;
  box-shadow: inset -1px -1px #3584e4;
  color: #1e3a8a;
  font-size: 11px;
  font-weight: 700;
  text-align: center;
}
.handle {
  position: absolute;
  right: -2px;
  bottom: -2px;
  width: 4px;
  height: 4px;
  background: #3584e4;
}
.title { padding-top: 2px; color: #1e3a8a; font-size: 14px; font-weight: 700; line-height: 18px; }
.subtitle { color: #4b5563; font-size: 10px; font-style: italic; }
.label { position: relative; color: #1e3a8a; font-weight: 700; vertical-align: bottom; }
.clip { display: block; overflow: hidden; }
.date { background: #f3f4f6; text-align: right; vertical-align: bottom; }
.band { padding-left: 1px; background: #1e3a8a; color: #fff; font-size: 11px; font-weight: 700; line-height: 14px; }
.note {
  position: relative;
  padding: 1px 0 0 1px;
  vertical-align: top;
  font-family: "Open Sans", "Noto Sans", sans-serif;
  line-height: 13px;
}
.more {
  position: absolute;
  right: 0;
  top: 50%;
  margin-top: -3px;
  border: solid transparent;
  border-width: 3px 0 3px 3px;
  border-left-color: #5a1020;
}

.vscroll { padding: 5px 2px; background: #cfcfcf; }
.vthumb { height: 32%; border-radius: 3px; background: #838584; }
.hscroll { padding: 2px; background: #cfcfcf; }
.hthumb { width: 47%; height: 6px; border-radius: 3px; background: #7d7f7e; }

.tabs { height: 15px; flex: none; display: flex; padding-left: 6px; font-size: 8px; }
.tab-nav { width: 62px; height: 14px; margin-right: 8px; }
.add-sheet { margin-right: 4px; }
.add-sheet svg { width: 12px; height: 14px; }
.tab {
  display: flex;
  align-items: center;
  gap: 5px;
  padding: 0 17px 0 3px;
  border-right: 1px solid #d4d2cf;
}
.tab.active {
  padding: 0 16px 0 1px;
  border-right: 0;
  background: #fff;
  box-shadow: inset 0 -2px #8c8b8a;
  font-weight: 700;
}
.lock { width: 10px; height: 12px; stroke: #555; }

.sidebar {
  position: relative;
  width: 39px;
  flex: none;
  display: flex;
  flex-direction: column;
  align-items: center;
  gap: 7px;
  padding-top: 4px;
  border-left: 1px solid #d2d0cd;
}
.side { width: 22px; height: 22px; display: flex; align-items: center; justify-content: center; }
.fx-side { font-size: 19px; line-height: 20px; }
.collapse {
  position: absolute;
  left: -1px;
  top: 269px;
  width: 5px;
  height: 50px;
  background: #969594;
}
.collapse::before {
  content: "";
  display: block;
  border: solid transparent;
  border-width: 2px 0 2px 3px;
  border-left-color: #fff;
}

.status {
  height: 18px;
  flex: none;
  display: grid;
  grid-template-columns: 20px 160fr 224fr 195fr 171fr 45px 31px 20px 20px 185fr 129px;
  align-items: center;
  border-top: 1px solid #d2d0cd;
  font-size: 8px;
}
.cell {
  height: 14px;
  display: flex;
  align-items: center;
  padding-left: 6px;
  border-right: 1px solid #e2e0de;
  white-space: nowrap;
}
.mid { justify-content: center; padding: 0; }
.save-state { width: 12px; height: 12px; }
.mode { width: 20px; height: 12px; }
.zoom { padding: 0 7px 0 6px; border: 0; }
.zoom button { width: 8px; font-size: 13px; font-weight: 700; }
.zoom input {
  flex: 1;
  min-width: 0;
  height: 10px;
  margin: 0 3px;
  appearance: none;
  background: linear-gradient(#aaa, #aaa) center / 100% 1px no-repeat;
}
.zoom input::-webkit-slider-thumb {
  appearance: none;
  width: 3px;
  height: 7px;
  border: 1px solid #555;
  background: #fff;
}
.percent { margin-left: 9px; }
```
